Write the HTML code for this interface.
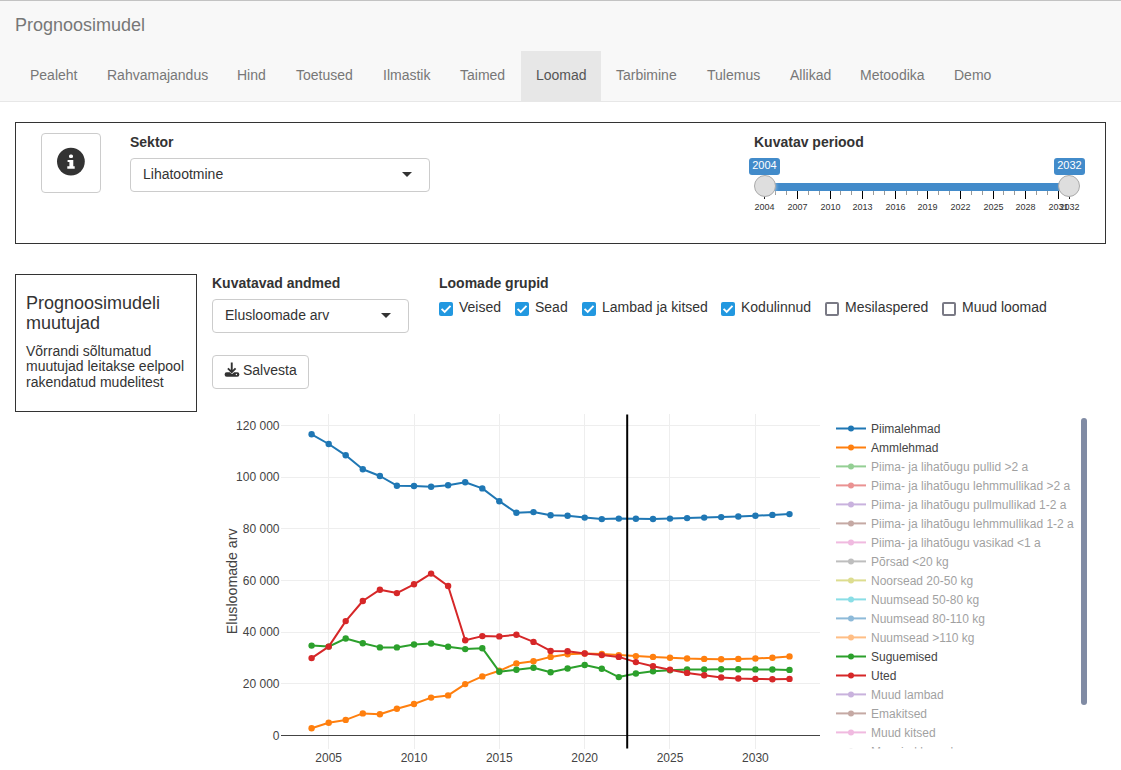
<!DOCTYPE html>
<html><head><meta charset="utf-8"><title>Prognoosimudel</title>
<style>
*{box-sizing:border-box}
html,body{margin:0;padding:0;width:1121px;height:770px;overflow:hidden;background:#fff}
body{font-family:"Liberation Sans",sans-serif;font-size:14px;line-height:20px;color:#333;position:relative}
.abs{position:absolute}
.navbar{position:absolute;left:0;top:0;width:1121px;height:102px;background:#f8f8f8;border-top:1px solid #c3c3c3;border-bottom:1px solid #e7e7e7}
.brand{position:absolute;left:15px;top:14px;font-size:18px;line-height:20px;color:#777;white-space:nowrap}
.tabs div{position:absolute;top:50px;height:50px;padding:14px 0 0 15px;line-height:20px;color:#777;white-space:nowrap}
.tabs div.active{background:#e7e7e7;color:#555}
.box{position:absolute;border:1px solid #333}
.lbl{position:absolute;font-weight:bold;white-space:nowrap}
.sel{position:absolute;border:1px solid #ccc;border-radius:4px;background:#fff;height:34px;padding:4.5px 12px;line-height:20px;white-space:nowrap}
.caret{position:absolute;width:0;height:0;border-left:5px solid transparent;border-right:5px solid transparent;border-top:5px solid #333}
.btn{position:absolute;border:1px solid #ccc;border-radius:4px;background:#fff}
.cb{position:absolute;top:302px;width:14px;height:14px;border-radius:2px}
.cb.on{background:#2298e0}
.cb svg{display:block}
.cb.off{border:2px solid #7a7a85;background:#fff}
.cbt{position:absolute;top:297px;white-space:nowrap}
.tick{position:absolute;top:191px;width:1px;background:#000}
.tick.small{background:#999}
.gtext{position:absolute;top:203px;width:40px;text-align:center;font-size:9px;line-height:9px;color:#333}
.badge{position:absolute;top:158px;height:17px;width:31px;background:#428bca;color:#fff;font-size:11px;line-height:15px;padding:0 3px;border-radius:3px;text-align:center}
.handle{position:absolute;top:175px;width:22px;height:22px;border:1px solid #aaa;background:#dedede;border-radius:50%;box-shadow:1px 1px 3px rgba(255,255,255,0.3)}
svg.chart{position:absolute;left:0;top:0}
</style></head>
<body>
<div class="navbar">
  <div class="brand">Prognoosimudel</div>
  <div class="tabs"><div style="left:15px;width:77px">Pealeht</div><div style="left:92px;width:130px">Rahvamajandus</div><div style="left:222px;width:59px">Hind</div><div style="left:281px;width:87px">Toetused</div><div style="left:368px;width:77px">Ilmastik</div><div style="left:445px;width:76px">Taimed</div><div class="active" style="left:521px;width:80px">Loomad</div><div style="left:601px;width:91px">Tarbimine</div><div style="left:692px;width:83px">Tulemus</div><div style="left:775px;width:70px">Allikad</div><div style="left:845px;width:94px">Metoodika</div><div style="left:939px;width:68px">Demo</div></div>
</div>

<div class="box" style="left:15px;top:122px;width:1091px;height:122px"></div>
<div class="btn" style="left:41px;top:133px;width:60px;height:60px"></div>
<svg class="abs" style="left:56px;top:147px" width="30" height="30" viewBox="0 0 30 30">
  <circle cx="14.9" cy="14.6" r="13.9" fill="#333"/>
  <rect x="13" y="7.6" width="4" height="3.4" rx="1.5" fill="#fff"/>
  <path d="M11.6 12.9H17.3V19.3H18.7V21.8H11.3V19.3H13.4V15.1H11.6Z" fill="#fff"/>
</svg>
<div class="lbl" style="left:130px;top:132px">Sektor</div>
<div class="sel" style="left:130px;top:158px;width:300px">Lihatootmine</div>
<div class="caret" style="left:402px;top:172px"></div>

<div class="lbl" style="left:754px;top:132px">Kuvatav periood</div>
<div class="abs" style="left:765px;top:183px;width:304px;height:8px;background:#428bca"></div>
<div class="tick" style="left:764px;height:8px"></div><div class="gtext" style="left:744.5px">2004</div><div class="tick small" style="left:775px;height:4px"></div><div class="tick small" style="left:786px;height:4px"></div><div class="tick" style="left:797px;height:8px"></div><div class="gtext" style="left:777.5px">2007</div><div class="tick small" style="left:808px;height:4px"></div><div class="tick small" style="left:819px;height:4px"></div><div class="tick" style="left:830px;height:8px"></div><div class="gtext" style="left:810.5px">2010</div><div class="tick small" style="left:840px;height:4px"></div><div class="tick small" style="left:851px;height:4px"></div><div class="tick" style="left:862px;height:8px"></div><div class="gtext" style="left:842.5px">2013</div><div class="tick small" style="left:873px;height:4px"></div><div class="tick small" style="left:884px;height:4px"></div><div class="tick" style="left:895px;height:8px"></div><div class="gtext" style="left:875.5px">2016</div><div class="tick small" style="left:906px;height:4px"></div><div class="tick small" style="left:917px;height:4px"></div><div class="tick" style="left:927px;height:8px"></div><div class="gtext" style="left:907.5px">2019</div><div class="tick small" style="left:938px;height:4px"></div><div class="tick small" style="left:949px;height:4px"></div><div class="tick" style="left:960px;height:8px"></div><div class="gtext" style="left:940.5px">2022</div><div class="tick small" style="left:971px;height:4px"></div><div class="tick small" style="left:982px;height:4px"></div><div class="tick" style="left:993px;height:8px"></div><div class="gtext" style="left:973.5px">2025</div><div class="tick small" style="left:1003px;height:4px"></div><div class="tick small" style="left:1014px;height:4px"></div><div class="tick" style="left:1025px;height:8px"></div><div class="gtext" style="left:1005.5px">2028</div><div class="tick small" style="left:1036px;height:4px"></div><div class="tick small" style="left:1047px;height:4px"></div><div class="tick" style="left:1058px;height:8px"></div><div class="gtext" style="left:1038.5px">2031</div><div class="tick" style="left:1069px;height:8px"></div><div class="gtext" style="left:1049.5px">2032</div>
<div class="handle" style="left:754px"></div>
<div class="handle" style="left:1058px"></div>
<div class="badge" style="left:749px">2004</div>
<div class="badge" style="left:1054px">2032</div>

<div class="box" style="left:15px;top:274px;width:182px;height:138px"></div>
<div class="abs" style="left:26px;top:293px;font-size:18px;line-height:20px;width:165px">Prognoosimudeli muutujad</div>
<div class="abs" style="left:26px;top:344px;line-height:15.4px;width:170px">Võrrandi sõltumatud muutujad leitakse eelpool rakendatud mudelitest</div>

<div class="lbl" style="left:212px;top:273px">Kuvatavad andmed</div>
<div class="sel" style="left:212px;top:299px;width:197px">Elusloomade arv</div>
<div class="caret" style="left:381px;top:313px"></div>
<div class="btn" style="left:212px;top:355px;width:97px;height:34px"></div>
<svg class="abs" style="left:224px;top:362px" width="16" height="16" viewBox="0 0 16 16">
  <path d="M7.75 0.6V10.2M3.9 6.4L7.75 10.1L11.6 6.4" fill="none" stroke="#333" stroke-width="1.9"/>
  <path d="M2.7 10.3h3.2l1.3 1.3q0.8 0.8 1.6 0l1.3-1.3h3.2q2.1 0 2.1 2.2t-2.1 2.2h-10.6q-2.1 0-2.1-2.2t2.1-2.2z" fill="#333"/>
  <circle cx="12.4" cy="12.5" r="0.7" fill="#fff"/>
</svg>
<div class="abs" style="left:243px;top:360px;white-space:nowrap">Salvesta</div>

<div class="lbl" style="left:439px;top:273px">Loomade grupid</div>
<div class="cb on" style="left:439px"><svg width="14" height="14" viewBox="0 0 14 14"><path d="M2.6 6.9L5.7 9.9L11.5 3.9" fill="none" stroke="#fff" stroke-width="1.9"/></svg></div>
<div class="cbt" style="left:459px">Veised</div>
<div class="cb on" style="left:515px"><svg width="14" height="14" viewBox="0 0 14 14"><path d="M2.6 6.9L5.7 9.9L11.5 3.9" fill="none" stroke="#fff" stroke-width="1.9"/></svg></div>
<div class="cbt" style="left:535px">Sead</div>
<div class="cb on" style="left:582px"><svg width="14" height="14" viewBox="0 0 14 14"><path d="M2.6 6.9L5.7 9.9L11.5 3.9" fill="none" stroke="#fff" stroke-width="1.9"/></svg></div>
<div class="cbt" style="left:602px">Lambad ja kitsed</div>
<div class="cb on" style="left:721px"><svg width="14" height="14" viewBox="0 0 14 14"><path d="M2.6 6.9L5.7 9.9L11.5 3.9" fill="none" stroke="#fff" stroke-width="1.9"/></svg></div>
<div class="cbt" style="left:741px">Kodulinnud</div>
<div class="cb off" style="left:825px"></div>
<div class="cbt" style="left:845px">Mesilaspered</div>
<div class="cb off" style="left:942px"></div>
<div class="cbt" style="left:962px">Muud loomad</div>

<svg class="chart" width="1121" height="770" viewBox="0 0 1121 770">
<defs><clipPath id="legclip"><rect x="830" y="414" width="260" height="334.5"/></clipPath><clipPath id="plotclip"><rect x="281" y="414" width="539" height="335"/></clipPath></defs>
<line x1="281" x2="820" y1="683.5" y2="683.5" stroke="#eee" stroke-width="1"/>
<line x1="281" x2="820" y1="632.5" y2="632.5" stroke="#eee" stroke-width="1"/>
<line x1="281" x2="820" y1="580.5" y2="580.5" stroke="#eee" stroke-width="1"/>
<line x1="281" x2="820" y1="528.5" y2="528.5" stroke="#eee" stroke-width="1"/>
<line x1="281" x2="820" y1="477.5" y2="477.5" stroke="#eee" stroke-width="1"/>
<line x1="281" x2="820" y1="425.5" y2="425.5" stroke="#eee" stroke-width="1"/>
<line x1="328.5" x2="328.5" y1="414" y2="749" stroke="#eee" stroke-width="1"/>
<line x1="414.5" x2="414.5" y1="414" y2="749" stroke="#eee" stroke-width="1"/>
<line x1="499.5" x2="499.5" y1="414" y2="749" stroke="#eee" stroke-width="1"/>
<line x1="584.5" x2="584.5" y1="414" y2="749" stroke="#eee" stroke-width="1"/>
<line x1="669.5" x2="669.5" y1="414" y2="749" stroke="#eee" stroke-width="1"/>
<line x1="755.5" x2="755.5" y1="414" y2="749" stroke="#eee" stroke-width="1"/>
<line x1="281" x2="820" y1="735.5" y2="735.5" stroke="#444" stroke-width="1"/>

<g font-family="Liberation Sans, sans-serif" font-size="12" fill="#444"><text x="279.5" y="739.7" text-anchor="end">0</text>
<text x="279.5" y="688.0" text-anchor="end">20 000</text>
<text x="279.5" y="636.4" text-anchor="end">40 000</text>
<text x="279.5" y="584.7" text-anchor="end">60 000</text>
<text x="279.5" y="533.0" text-anchor="end">80 000</text>
<text x="279.5" y="481.4" text-anchor="end">100 000</text>
<text x="279.5" y="429.7" text-anchor="end">120 000</text>
<text x="328.7" y="762" text-anchor="middle">2005</text>
<text x="414.0" y="762" text-anchor="middle">2010</text>
<text x="499.3" y="762" text-anchor="middle">2015</text>
<text x="584.7" y="762" text-anchor="middle">2020</text>
<text x="670.0" y="762" text-anchor="middle">2025</text>
<text x="755.4" y="762" text-anchor="middle">2030</text>
</g>
<text transform="translate(236.5,581.3) rotate(-90)" text-anchor="middle" font-family="Liberation Sans, sans-serif" font-size="14.2" fill="#444">Elusloomade arv</text>
<g clip-path="url(#plotclip)">
<polyline points="311.6,434.3 328.7,444.0 345.7,455.3 362.8,469.2 379.9,476.0 396.9,485.7 414.0,486.0 431.1,486.7 448.1,485.2 465.2,482.3 482.3,488.4 499.3,501.2 516.4,512.8 533.5,512.1 550.6,515.3 567.6,515.8 584.7,517.6 601.8,519.1 618.8,518.6 635.9,518.7 653.0,519.0 670.0,518.6 687.1,518.1 704.2,517.6 721.2,517.1 738.3,516.5 755.4,515.7 772.4,514.9 789.5,514.1" fill="none" stroke="#1f77b4" stroke-width="2" stroke-linejoin="round"/>
<circle cx="311.6" cy="434.3" r="3.2" fill="#1f77b4"/><circle cx="328.7" cy="444.0" r="3.2" fill="#1f77b4"/><circle cx="345.7" cy="455.3" r="3.2" fill="#1f77b4"/><circle cx="362.8" cy="469.2" r="3.2" fill="#1f77b4"/><circle cx="379.9" cy="476.0" r="3.2" fill="#1f77b4"/><circle cx="396.9" cy="485.7" r="3.2" fill="#1f77b4"/><circle cx="414.0" cy="486.0" r="3.2" fill="#1f77b4"/><circle cx="431.1" cy="486.7" r="3.2" fill="#1f77b4"/><circle cx="448.1" cy="485.2" r="3.2" fill="#1f77b4"/><circle cx="465.2" cy="482.3" r="3.2" fill="#1f77b4"/><circle cx="482.3" cy="488.4" r="3.2" fill="#1f77b4"/><circle cx="499.3" cy="501.2" r="3.2" fill="#1f77b4"/><circle cx="516.4" cy="512.8" r="3.2" fill="#1f77b4"/><circle cx="533.5" cy="512.1" r="3.2" fill="#1f77b4"/><circle cx="550.6" cy="515.3" r="3.2" fill="#1f77b4"/><circle cx="567.6" cy="515.8" r="3.2" fill="#1f77b4"/><circle cx="584.7" cy="517.6" r="3.2" fill="#1f77b4"/><circle cx="601.8" cy="519.1" r="3.2" fill="#1f77b4"/><circle cx="618.8" cy="518.6" r="3.2" fill="#1f77b4"/><circle cx="635.9" cy="518.7" r="3.2" fill="#1f77b4"/><circle cx="653.0" cy="519.0" r="3.2" fill="#1f77b4"/><circle cx="670.0" cy="518.6" r="3.2" fill="#1f77b4"/><circle cx="687.1" cy="518.1" r="3.2" fill="#1f77b4"/><circle cx="704.2" cy="517.6" r="3.2" fill="#1f77b4"/><circle cx="721.2" cy="517.1" r="3.2" fill="#1f77b4"/><circle cx="738.3" cy="516.5" r="3.2" fill="#1f77b4"/><circle cx="755.4" cy="515.7" r="3.2" fill="#1f77b4"/><circle cx="772.4" cy="514.9" r="3.2" fill="#1f77b4"/><circle cx="789.5" cy="514.1" r="3.2" fill="#1f77b4"/>
<polyline points="311.6,728.3 328.7,722.7 345.7,719.9 362.8,713.4 379.9,714.2 396.9,708.7 414.0,704.0 431.1,697.6 448.1,695.4 465.2,684.1 482.3,676.4 499.3,670.8 516.4,663.4 533.5,661.2 550.6,656.9 567.6,654.3 584.7,653.5 601.8,653.9 618.8,655.1 635.9,656.1 653.0,656.9 670.0,657.7 687.1,658.5 704.2,658.9 721.2,659.3 738.3,658.9 755.4,658.5 772.4,657.7 789.5,656.4" fill="none" stroke="#ff7f0e" stroke-width="2" stroke-linejoin="round"/>
<circle cx="311.6" cy="728.3" r="3.2" fill="#ff7f0e"/><circle cx="328.7" cy="722.7" r="3.2" fill="#ff7f0e"/><circle cx="345.7" cy="719.9" r="3.2" fill="#ff7f0e"/><circle cx="362.8" cy="713.4" r="3.2" fill="#ff7f0e"/><circle cx="379.9" cy="714.2" r="3.2" fill="#ff7f0e"/><circle cx="396.9" cy="708.7" r="3.2" fill="#ff7f0e"/><circle cx="414.0" cy="704.0" r="3.2" fill="#ff7f0e"/><circle cx="431.1" cy="697.6" r="3.2" fill="#ff7f0e"/><circle cx="448.1" cy="695.4" r="3.2" fill="#ff7f0e"/><circle cx="465.2" cy="684.1" r="3.2" fill="#ff7f0e"/><circle cx="482.3" cy="676.4" r="3.2" fill="#ff7f0e"/><circle cx="499.3" cy="670.8" r="3.2" fill="#ff7f0e"/><circle cx="516.4" cy="663.4" r="3.2" fill="#ff7f0e"/><circle cx="533.5" cy="661.2" r="3.2" fill="#ff7f0e"/><circle cx="550.6" cy="656.9" r="3.2" fill="#ff7f0e"/><circle cx="567.6" cy="654.3" r="3.2" fill="#ff7f0e"/><circle cx="584.7" cy="653.5" r="3.2" fill="#ff7f0e"/><circle cx="601.8" cy="653.9" r="3.2" fill="#ff7f0e"/><circle cx="618.8" cy="655.1" r="3.2" fill="#ff7f0e"/><circle cx="635.9" cy="656.1" r="3.2" fill="#ff7f0e"/><circle cx="653.0" cy="656.9" r="3.2" fill="#ff7f0e"/><circle cx="670.0" cy="657.7" r="3.2" fill="#ff7f0e"/><circle cx="687.1" cy="658.5" r="3.2" fill="#ff7f0e"/><circle cx="704.2" cy="658.9" r="3.2" fill="#ff7f0e"/><circle cx="721.2" cy="659.3" r="3.2" fill="#ff7f0e"/><circle cx="738.3" cy="658.9" r="3.2" fill="#ff7f0e"/><circle cx="755.4" cy="658.5" r="3.2" fill="#ff7f0e"/><circle cx="772.4" cy="657.7" r="3.2" fill="#ff7f0e"/><circle cx="789.5" cy="656.4" r="3.2" fill="#ff7f0e"/>
<polyline points="311.6,645.6 328.7,646.6 345.7,638.5 362.8,643.2 379.9,647.4 396.9,647.4 414.0,644.5 431.1,643.5 448.1,646.7 465.2,649.1 482.3,648.2 499.3,671.7 516.4,669.8 533.5,667.8 550.6,672.3 567.6,668.5 584.7,665.0 601.8,668.7 618.8,677.1 635.9,673.5 653.0,671.3 670.0,670.2 687.1,669.5 704.2,669.4 721.2,669.2 738.3,669.2 755.4,669.4 772.4,669.5 789.5,669.9" fill="none" stroke="#2ca02c" stroke-width="2" stroke-linejoin="round"/>
<circle cx="311.6" cy="645.6" r="3.2" fill="#2ca02c"/><circle cx="328.7" cy="646.6" r="3.2" fill="#2ca02c"/><circle cx="345.7" cy="638.5" r="3.2" fill="#2ca02c"/><circle cx="362.8" cy="643.2" r="3.2" fill="#2ca02c"/><circle cx="379.9" cy="647.4" r="3.2" fill="#2ca02c"/><circle cx="396.9" cy="647.4" r="3.2" fill="#2ca02c"/><circle cx="414.0" cy="644.5" r="3.2" fill="#2ca02c"/><circle cx="431.1" cy="643.5" r="3.2" fill="#2ca02c"/><circle cx="448.1" cy="646.7" r="3.2" fill="#2ca02c"/><circle cx="465.2" cy="649.1" r="3.2" fill="#2ca02c"/><circle cx="482.3" cy="648.2" r="3.2" fill="#2ca02c"/><circle cx="499.3" cy="671.7" r="3.2" fill="#2ca02c"/><circle cx="516.4" cy="669.8" r="3.2" fill="#2ca02c"/><circle cx="533.5" cy="667.8" r="3.2" fill="#2ca02c"/><circle cx="550.6" cy="672.3" r="3.2" fill="#2ca02c"/><circle cx="567.6" cy="668.5" r="3.2" fill="#2ca02c"/><circle cx="584.7" cy="665.0" r="3.2" fill="#2ca02c"/><circle cx="601.8" cy="668.7" r="3.2" fill="#2ca02c"/><circle cx="618.8" cy="677.1" r="3.2" fill="#2ca02c"/><circle cx="635.9" cy="673.5" r="3.2" fill="#2ca02c"/><circle cx="653.0" cy="671.3" r="3.2" fill="#2ca02c"/><circle cx="670.0" cy="670.2" r="3.2" fill="#2ca02c"/><circle cx="687.1" cy="669.5" r="3.2" fill="#2ca02c"/><circle cx="704.2" cy="669.4" r="3.2" fill="#2ca02c"/><circle cx="721.2" cy="669.2" r="3.2" fill="#2ca02c"/><circle cx="738.3" cy="669.2" r="3.2" fill="#2ca02c"/><circle cx="755.4" cy="669.4" r="3.2" fill="#2ca02c"/><circle cx="772.4" cy="669.5" r="3.2" fill="#2ca02c"/><circle cx="789.5" cy="669.9" r="3.2" fill="#2ca02c"/>
<polyline points="311.6,658.1 328.7,646.6 345.7,621.1 362.8,601.0 379.9,589.7 396.9,593.1 414.0,584.3 431.1,573.6 448.1,586.0 465.2,640.2 482.3,636.1 499.3,636.4 516.4,634.8 533.5,641.9 550.6,650.9 567.6,651.2 584.7,653.5 601.8,655.1 618.8,656.9 635.9,662.1 653.0,666.2 670.0,669.7 687.1,672.9 704.2,675.3 721.2,677.4 738.3,678.5 755.4,678.9 772.4,679.2 789.5,678.9" fill="none" stroke="#d62728" stroke-width="2" stroke-linejoin="round"/>
<circle cx="311.6" cy="658.1" r="3.2" fill="#d62728"/><circle cx="328.7" cy="646.6" r="3.2" fill="#d62728"/><circle cx="345.7" cy="621.1" r="3.2" fill="#d62728"/><circle cx="362.8" cy="601.0" r="3.2" fill="#d62728"/><circle cx="379.9" cy="589.7" r="3.2" fill="#d62728"/><circle cx="396.9" cy="593.1" r="3.2" fill="#d62728"/><circle cx="414.0" cy="584.3" r="3.2" fill="#d62728"/><circle cx="431.1" cy="573.6" r="3.2" fill="#d62728"/><circle cx="448.1" cy="586.0" r="3.2" fill="#d62728"/><circle cx="465.2" cy="640.2" r="3.2" fill="#d62728"/><circle cx="482.3" cy="636.1" r="3.2" fill="#d62728"/><circle cx="499.3" cy="636.4" r="3.2" fill="#d62728"/><circle cx="516.4" cy="634.8" r="3.2" fill="#d62728"/><circle cx="533.5" cy="641.9" r="3.2" fill="#d62728"/><circle cx="550.6" cy="650.9" r="3.2" fill="#d62728"/><circle cx="567.6" cy="651.2" r="3.2" fill="#d62728"/><circle cx="584.7" cy="653.5" r="3.2" fill="#d62728"/><circle cx="601.8" cy="655.1" r="3.2" fill="#d62728"/><circle cx="618.8" cy="656.9" r="3.2" fill="#d62728"/><circle cx="635.9" cy="662.1" r="3.2" fill="#d62728"/><circle cx="653.0" cy="666.2" r="3.2" fill="#d62728"/><circle cx="670.0" cy="669.7" r="3.2" fill="#d62728"/><circle cx="687.1" cy="672.9" r="3.2" fill="#d62728"/><circle cx="704.2" cy="675.3" r="3.2" fill="#d62728"/><circle cx="721.2" cy="677.4" r="3.2" fill="#d62728"/><circle cx="738.3" cy="678.5" r="3.2" fill="#d62728"/><circle cx="755.4" cy="678.9" r="3.2" fill="#d62728"/><circle cx="772.4" cy="679.2" r="3.2" fill="#d62728"/><circle cx="789.5" cy="678.9" r="3.2" fill="#d62728"/>

</g>
<line x1="627.2" x2="627.2" y1="414.5" y2="748.5" stroke="#000" stroke-width="2"/>
<g font-family="Liberation Sans, sans-serif" font-size="12" fill="#444"><g clip-path="url(#legclip)">
<g><line x1="836" x2="866" y1="428.4" y2="428.4" stroke="#1f77b4" stroke-width="2"/><circle cx="851" cy="428.4" r="3" fill="#1f77b4"/><text x="871" y="432.6">Piimalehmad</text></g>
<g><line x1="836" x2="866" y1="447.4" y2="447.4" stroke="#ff7f0e" stroke-width="2"/><circle cx="851" cy="447.4" r="3" fill="#ff7f0e"/><text x="871" y="451.6">Ammlehmad</text></g>
<g opacity="0.5"><line x1="836" x2="866" y1="466.4" y2="466.4" stroke="#2ca02c" stroke-width="2"/><circle cx="851" cy="466.4" r="3" fill="#2ca02c"/><text x="871" y="470.6">Piima- ja lihatõugu pullid &gt;2 a</text></g>
<g opacity="0.5"><line x1="836" x2="866" y1="485.4" y2="485.4" stroke="#d62728" stroke-width="2"/><circle cx="851" cy="485.4" r="3" fill="#d62728"/><text x="871" y="489.6">Piima- ja lihatõugu lehmmullikad &gt;2 a</text></g>
<g opacity="0.5"><line x1="836" x2="866" y1="504.4" y2="504.4" stroke="#9467bd" stroke-width="2"/><circle cx="851" cy="504.4" r="3" fill="#9467bd"/><text x="871" y="508.6">Piima- ja lihatõugu pullmullikad 1-2 a</text></g>
<g opacity="0.5"><line x1="836" x2="866" y1="523.4" y2="523.4" stroke="#8c564b" stroke-width="2"/><circle cx="851" cy="523.4" r="3" fill="#8c564b"/><text x="871" y="527.6">Piima- ja lihatõugu lehmmullikad 1-2 a</text></g>
<g opacity="0.5"><line x1="836" x2="866" y1="542.4" y2="542.4" stroke="#e377c2" stroke-width="2"/><circle cx="851" cy="542.4" r="3" fill="#e377c2"/><text x="871" y="546.6">Piima- ja lihatõugu vasikad &lt;1 a</text></g>
<g opacity="0.5"><line x1="836" x2="866" y1="561.4" y2="561.4" stroke="#7f7f7f" stroke-width="2"/><circle cx="851" cy="561.4" r="3" fill="#7f7f7f"/><text x="871" y="565.6">Põrsad &lt;20 kg</text></g>
<g opacity="0.5"><line x1="836" x2="866" y1="580.4" y2="580.4" stroke="#bcbd22" stroke-width="2"/><circle cx="851" cy="580.4" r="3" fill="#bcbd22"/><text x="871" y="584.6">Noorsead 20-50 kg</text></g>
<g opacity="0.5"><line x1="836" x2="866" y1="599.4" y2="599.4" stroke="#17becf" stroke-width="2"/><circle cx="851" cy="599.4" r="3" fill="#17becf"/><text x="871" y="603.6">Nuumsead 50-80 kg</text></g>
<g opacity="0.5"><line x1="836" x2="866" y1="618.4" y2="618.4" stroke="#1f77b4" stroke-width="2"/><circle cx="851" cy="618.4" r="3" fill="#1f77b4"/><text x="871" y="622.6">Nuumsead 80-110 kg</text></g>
<g opacity="0.5"><line x1="836" x2="866" y1="637.4" y2="637.4" stroke="#ff7f0e" stroke-width="2"/><circle cx="851" cy="637.4" r="3" fill="#ff7f0e"/><text x="871" y="641.6">Nuumsead &gt;110 kg</text></g>
<g><line x1="836" x2="866" y1="656.4" y2="656.4" stroke="#2ca02c" stroke-width="2"/><circle cx="851" cy="656.4" r="3" fill="#2ca02c"/><text x="871" y="660.6">Suguemised</text></g>
<g><line x1="836" x2="866" y1="675.4" y2="675.4" stroke="#d62728" stroke-width="2"/><circle cx="851" cy="675.4" r="3" fill="#d62728"/><text x="871" y="679.6">Uted</text></g>
<g opacity="0.5"><line x1="836" x2="866" y1="694.4" y2="694.4" stroke="#9467bd" stroke-width="2"/><circle cx="851" cy="694.4" r="3" fill="#9467bd"/><text x="871" y="698.6">Muud lambad</text></g>
<g opacity="0.5"><line x1="836" x2="866" y1="713.4" y2="713.4" stroke="#8c564b" stroke-width="2"/><circle cx="851" cy="713.4" r="3" fill="#8c564b"/><text x="871" y="717.6">Emakitsed</text></g>
<g opacity="0.5"><line x1="836" x2="866" y1="732.4" y2="732.4" stroke="#e377c2" stroke-width="2"/><circle cx="851" cy="732.4" r="3" fill="#e377c2"/><text x="871" y="736.6">Muud kitsed</text></g>
<g opacity="0.5"><line x1="836" x2="866" y1="751.4" y2="751.4" stroke="#7f7f7f" stroke-width="2"/><circle cx="851" cy="751.4" r="3" fill="#7f7f7f"/><text x="871" y="755.6">Munejad kanad</text></g>
</g>
</g>
<rect x="1081" y="418" width="6" height="287" rx="3" fill="#808ba4"/>
</svg>
</body></html>
